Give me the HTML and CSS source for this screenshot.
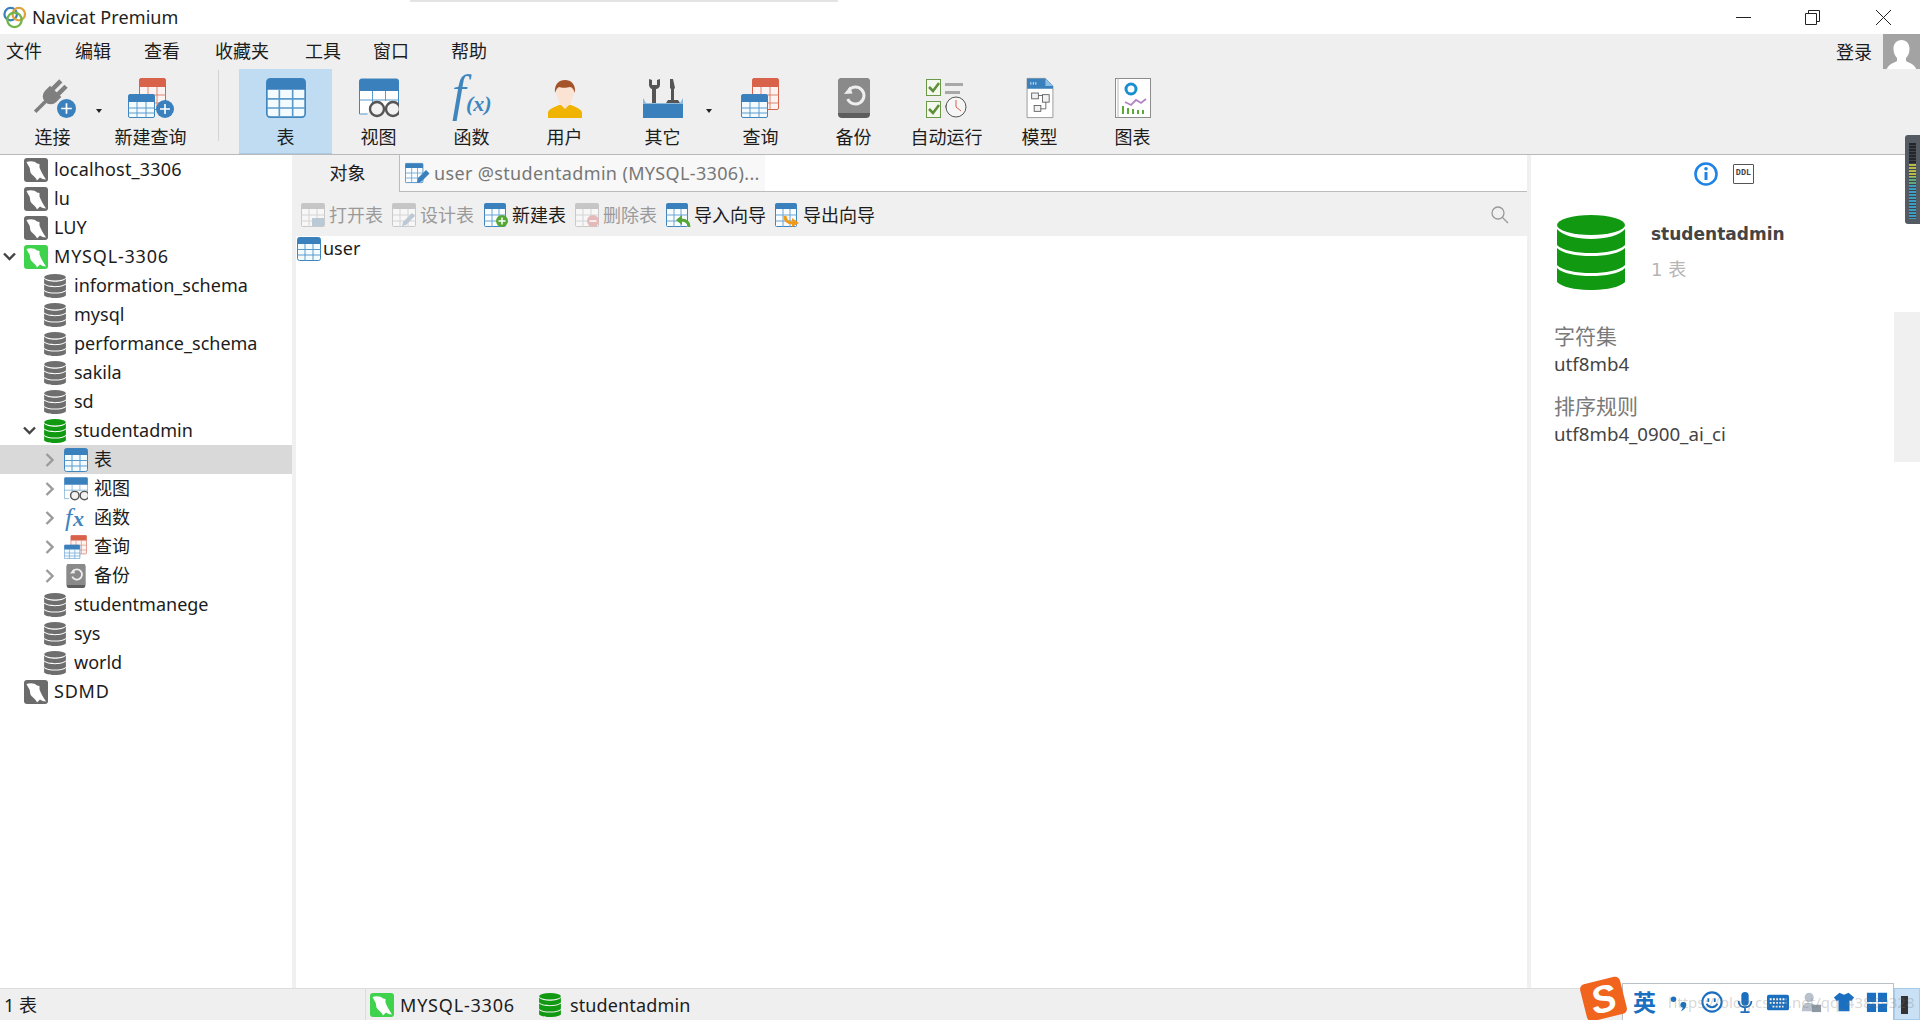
FILE: index.html
```html
<!DOCTYPE html>
<html lang="zh">
<head>
<meta charset="utf-8">
<title>Navicat Premium</title>
<link rel="stylesheet" href="styles.css">
</head>
<body>
<svg class="defs" width="0" height="0" aria-hidden="true">
  <defs>
    <symbol id="dolphin" viewBox="0 0 24 24">
      <path fill="#fff" d="M2.500 4C6 2.500 11 3 13 5.500L15.500 6v3.500C17 13 18.500 16.500 22 21.500 19.500 21.500 17.500 20.500 16 19.500L13 22.500C12 19.500 9.500 18 7.500 16 5.500 14 6.500 11.500 5.500 9.500 4.500 8 3.500 6 2.500 4z"/>
    </symbol>
    <symbol id="db" viewBox="0 0 68 75">
      <ellipse cx="34" cy="10" rx="34" ry="10" fill="currentColor"/>
      <path fill="currentColor" d="M0 14C10 27.300 58 27.300 68 14V30C58 40.700 10 40.700 0 30z"/>
      <path fill="currentColor" d="M0 33C10 43.700 58 43.700 68 33V50C58 60.700 10 60.700 0 50z"/>
      <path fill="currentColor" d="M0 53C10 63.700 58 63.700 68 53V67C58 77.700 10 77.700 0 67z"/>
    </symbol>
    <symbol id="tbl" viewBox="0 0 24 24">
      <rect x=".5" y=".5" width="23" height="23" rx="2" fill="#f4fbff" stroke="#3f86bf"/>
      <path fill="#3a80bd" d="M.5 7V2.500a2 2 0 0 1 2-2h19a2 2 0 0 1 2 2V7z"/>
      <path fill="none" stroke="#5b9bcb" d="M.5 12.500h23M.5 18h23M8 7v16.500M16 7v16.500"/>
    </symbol>
    <symbol id="viewi" viewBox="0 0 40 40">
      <path fill="#fff" stroke="#3f86bf" d="M.5 36V3a2 2 0 0 1 2-2h35a2 2 0 0 1 2 2v25"/>
      <path fill="#3a80bd" d="M.5 13V3a2 2 0 0 1 2-2h35a2 2 0 0 1 2 2v10z"/>
      <path fill="none" stroke="#5b9bcb" d="M.5 22h39M.5 36h8M13.500 13v12M26.500 13v10"/>
      <g fill="#f2f2f2" stroke="#555" stroke-width="2.400"><circle cx="18" cy="31" r="7"/><circle cx="34" cy="31" r="7"/></g>
    </symbol>
    <symbol id="query" viewBox="0 0 40 40">
      <rect x="11.500" y=".5" width="26" height="31" rx="1.500" fill="#fbf3f1" stroke="#d9624a"/>
      <path fill="#d9624a" d="M11.500 9V2a1.500 1.500 0 0 1 1.500-1.500h23A1.500 1.500 0 0 1 37.500 2v7z"/>
      <path fill="none" stroke="#df8473" d="M11.500 17h26M11.500 25h26M20 9v22M29 9v22"/>
      <rect x=".5" y="16.500" width="26" height="23" rx="1.500" fill="#f4fbff" stroke="#3f86bf"/>
      <path fill="#3a80bd" d="M.5 24v-6A1.500 1.500 0 0 1 2 16.500h23a1.500 1.500 0 0 1 1.500 1.500v6z"/>
      <path fill="none" stroke="#5b9bcb" d="M.5 30h26M.5 35h26M9 24v15.500M18 24v15.500"/>
    </symbol>
    <symbol id="backup" viewBox="0 0 32 40">
      <rect width="32" height="40" rx="4" fill="#5e5e5e"/>
      <path d="M0 4a4 4 0 0 1 4-4h24a4 4 0 0 1 4 4v31H0z" fill="#8a8a8a"/>
      <path fill="none" stroke="#eee" stroke-width="3" d="M11 12a8.500 8.500 0 1 1-1.300 9"/>
      <path fill="#eee" d="M6 16l8.500-.5-2.500-7z"/>
    </symbol>
    <symbol id="plus" viewBox="0 0 18 18">
      <circle cx="9" cy="9" r="9" fill="#3a80bd"/>
      <path stroke="#fff" stroke-width="1.600" d="M9 4v10M4 9h10"/>
    </symbol>
    <symbol id="chev-down" viewBox="0 0 13 9"><path fill="none" stroke="#444" stroke-width="2.400" d="M1 1.500l5.500 5.500L12 1.500"/></symbol>
    <symbol id="chev-right" viewBox="0 0 9 14"><path fill="none" stroke="#9b9b9b" stroke-width="2.400" d="M1.500 1l6 6-6 6"/></symbol>
    <symbol id="fade" viewBox="0 0 24 24">
      <rect x=".5" y=".5" width="23" height="23" rx="1" fill="#f7f7f7" stroke="#c9c9c9"/>
      <path fill="#c6c6c6" d="M.5 6V1a.5.500 0 0 1 .5-.5h22a.5.500 0 0 1 .5.500v5z"/>
      <path fill="none" stroke="#d4d4d4" d="M.5 12h23M.5 18h23M8 6v18M16 6v18"/>
    </symbol>
    <symbol id="tblb" viewBox="0 0 24 24">
      <rect x=".5" y=".5" width="21" height="23" rx="1" fill="#fafdff" stroke="#3f86bf"/>
      <path fill="#3a80bd" d="M.5 6V1.500a1 1 0 0 1 1-1h19a1 1 0 0 1 1 1V6z"/>
      <path fill="none" stroke="#6aa5d1" d="M.5 12h21M.5 18h21M8 6v18M15 6v18"/>
    </symbol>
  </defs>
</svg>

<div class="shadow-window"></div>

<header class="titlebar">
  <svg class="applogo" viewBox="0 0 24 24">
    <circle cx="8" cy="9" r="6.500" fill="none" stroke="#3a80bd" stroke-width="2.400"/>
    <circle cx="16.500" cy="9" r="6.500" fill="none" stroke="#e0a23c" stroke-width="2.400"/>
    <circle cx="12" cy="15" r="7.500" fill="none" stroke="#6fb54a" stroke-width="2.400"/>
  </svg>
  <span class="apptitle">Navicat Premium</span>
  <div class="winctl">
    <svg viewBox="0 0 15 15"><path d="M0 7.500h15" stroke="#222" fill="none"/></svg>
    <svg viewBox="0 0 15 15"><path d="M.5 3.500h11v11H.5zM3.500 3.500V.5h11v11h-3" stroke="#222" fill="none"/></svg>
    <svg viewBox="0 0 15 15"><path d="M0 0l15 15M15 0L0 15" stroke="#222" fill="none"/></svg>
  </div>
</header>

<nav class="menubar">
  <span class="menu m1">文件</span>
  <span class="menu m2">编辑</span>
  <span class="menu m3">查看</span>
  <span class="menu m4">收藏夹</span>
  <span class="menu m5">工具</span>
  <span class="menu m6">窗口</span>
  <span class="menu m7">帮助</span>
  <span class="login">登录</span>
  <svg class="avatar" viewBox="0 0 37 38">
    <rect width="37" height="38" fill="#a3a3a3"/>
    <path fill="#fff" d="M18.500 6c5 0 8 3.500 8 9 0 4-1.500 7-3.500 9v3c3 2 10 3 11 11H3c1-8 8-9 11-11v-3c-2-2-3.500-5-3.500-9 0-5.500 3-9 8-9z"/>
  </svg>
</nav>

<section class="toolbar">
  <div class="tool tool-more">
    <svg class="ti" viewBox="0 0 46 40">
      <g transform="translate(20 19) rotate(45)" fill="#7f7f7f">
        <path d="M-8-8H8v7A8 8 0 0 1-8-1z"/>
        <rect x="-6" y="-19" width="4.500" height="12"/>
        <rect x="1.500" y="-19" width="4.500" height="12"/>
        <rect x="-1.800" y="6" width="3.600" height="15"/>
      </g>
      <use href="#plus" x="27" y="21" width="19" height="19"/>
    </svg>
    <span class="tl">连接</span>
    <i class="drop"></i>
  </div>
  <div class="tool">
    <svg class="ti" viewBox="0 0 46 40">
      <use href="#query" x="0" y="0" width="40" height="40"/>
      <use href="#plus" x="28" y="22" width="18" height="18"/>
    </svg>
    <span class="tl">新建查询</span>
  </div>
  <span class="tsep"></span>
  <div class="tool selected">
    <svg class="ti" viewBox="0 0 40 40"><use href="#tbl" width="40" height="40"/></svg>
    <span class="tl">表</span>
  </div>
  <div class="tool">
    <svg class="ti" viewBox="0 0 40 40"><use href="#viewi" width="40" height="40"/></svg>
    <span class="tl">视图</span>
  </div>
  <div class="tool">
    <svg class="ti" viewBox="0 0 44 40"><text x="2" y="32" class="fxbig">f</text><text x="16" y="33" class="fxsm">(x)</text></svg>
    <span class="tl">函数</span>
  </div>
  <div class="tool">
    <svg class="ti" viewBox="0 0 40 40">
      <path fill="#f0b400" d="M3 40v-5c0-4 7-6 11-8h12c4 2 11 4 11 8v5z"/>
      <path fill="#fbe3d4" d="M14 25l6 6 6-6v-6H14z"/>
      <ellipse cx="20" cy="14" rx="9" ry="11" fill="#fbe3d4"/>
      <path fill="#a5542a" d="M10 15C9 6 14 2 20 2s11 4 10 13c-1-3-3-6-5-6-3 1-9 1-11 0-2 1-3 3-4 6z"/>
    </svg>
    <span class="tl">用户</span>
  </div>
  <div class="tool tool-more tool-after">
    <svg class="ti" viewBox="0 0 40 40">
      <path fill="#555" d="M6 1v6c0 2 2 4 3 4v14h4V11c2 0 4-2 4-4V1l-3 1v5H9V2zM27 1h3l2 9-1 1v11h4l2 3H23l2-3h3V11l-1-1z"/>
      <path fill="#3a80bd" d="M0 25h40v15H0z"/>
      <path fill="#8fbbdd" d="M0 20l3 5h34l3-5v6H0z"/>
    </svg>
    <span class="tl">其它</span>
    <i class="drop"></i>
  </div>
  <div class="tool">
    <svg class="ti" viewBox="0 0 40 40"><use href="#query" width="40" height="40"/></svg>
    <span class="tl">查询</span>
  </div>
  <div class="tool">
    <svg class="ti" viewBox="0 0 32 40"><use href="#backup" width="32" height="40"/></svg>
    <span class="tl">备份</span>
  </div>
  <div class="tool">
    <svg class="ti" viewBox="0 0 42 40">
      <g fill="#f4f8ee" stroke="#6a9a48"><rect x=".5" y="1.500" width="14" height="16"/><rect x=".5" y="23.500" width="14" height="16"/></g>
      <path d="M3 9l4 4 6-8M3 31l4 4 6-8" fill="none" stroke="#5f8f3a" stroke-width="2.500"/>
      <path fill="#a8a8a8" d="M19 5h18v3H19zM19 13h15v3H19zM19 27h4v3h-4z"/>
      <circle cx="30" cy="29" r="10" fill="#f6f6f6" stroke="#555"/>
      <path d="M30 22v7l5 4" stroke="#d9624a" fill="none"/>
    </svg>
    <span class="tl">自动运行</span>
  </div>
  <div class="tool">
    <svg class="ti" viewBox="0 0 32 48">
      <path fill="#fff" stroke="#8c8c8c" d="M.5.500h22l9 9v38H.5z"/>
      <path fill="#3a80bd" d="M.5.500h22l9 9V13H.5z"/>
      <path fill="#8fbfe4" d="M22.500.500l9 9h-9z"/>
      <path d="M5 5v3M8 5v3M11 5v3" stroke="#fff"/>
      <g fill="#f2f2f2" stroke="#555"><rect x="6" y="18" width="8" height="7"/><rect x="19" y="20" width="8" height="9"/><rect x="9" y="33" width="8" height="7"/></g>
      <path d="M14 21h5M23 29v8h-6" stroke="#555" fill="none"/>
    </svg>
    <span class="tl">模型</span>
  </div>
  <div class="tool">
    <svg class="ti" viewBox="0 0 36 40">
      <rect x=".5" y=".5" width="35" height="39" fill="#fff" stroke="#8c8c8c"/>
      <path d="M3 .5v39" stroke="#bbb"/>
      <circle cx="16" cy="11" r="5" fill="none" stroke="#1a8fd0" stroke-width="3"/>
      <path d="M10 24l6 3 5-5 5 3 5-4" fill="none" stroke="#b583c5" stroke-width="1.800"/>
      <path d="M7 28h2v8H7zM12 30h2v6h-2zM17 31h2v5h-2zM22 32h2v4h-2zM27 32h2v4h-2z" fill="#5ca83a"/>
    </svg>
    <span class="tl">图表</span>
  </div>
</section>

<main class="work">
  <aside class="tree">
    <div class="row"><span class="slot s0"></span><svg class="conn"><use href="#dolphin"/></svg><span class="nm ls2">localhost_3306</span></div>
    <div class="row"><span class="slot s0"></span><svg class="conn"><use href="#dolphin"/></svg><span class="nm">lu</span></div>
    <div class="row"><span class="slot s0"></span><svg class="conn"><use href="#dolphin"/></svg><span class="nm">LUY</span></div>
    <div class="row"><span class="slot s0"><svg class="cd"><use href="#chev-down"/></svg></span><svg class="conn on"><use href="#dolphin"/></svg><span class="nm ls1">MYSQL-3306</span></div>
    <div class="row"><span class="slot s1"></span><svg class="dbi"><use href="#db"/></svg><span class="nm">information_schema</span></div>
    <div class="row"><span class="slot s1"></span><svg class="dbi"><use href="#db"/></svg><span class="nm">mysql</span></div>
    <div class="row"><span class="slot s1"></span><svg class="dbi"><use href="#db"/></svg><span class="nm">performance_schema</span></div>
    <div class="row"><span class="slot s1"></span><svg class="dbi"><use href="#db"/></svg><span class="nm">sakila</span></div>
    <div class="row"><span class="slot s1"></span><svg class="dbi"><use href="#db"/></svg><span class="nm">sd</span></div>
    <div class="row"><span class="slot s1"><svg class="cd"><use href="#chev-down"/></svg></span><svg class="dbi green"><use href="#db"/></svg><span class="nm">studentadmin</span></div>
    <div class="row active"><span class="slot s2"><svg class="cr"><use href="#chev-right"/></svg></span><svg class="leaf" viewBox="0 0 24 24"><use href="#tbl" width="24" height="24"/></svg><span class="nm">表</span></div>
    <div class="row"><span class="slot s2"><svg class="cr"><use href="#chev-right"/></svg></span><svg class="leaf" viewBox="0 0 40 40"><use href="#viewi" width="40" height="40"/></svg><span class="nm">视图</span></div>
    <div class="row"><span class="slot s2"><svg class="cr"><use href="#chev-right"/></svg></span><svg class="leaf" viewBox="0 0 24 24"><text x="1" y="20" class="fxtree">f</text><text x="9" y="20" class="fxtree2">x</text></svg><span class="nm">函数</span></div>
    <div class="row"><span class="slot s2"><svg class="cr"><use href="#chev-right"/></svg></span><svg class="leaf" viewBox="0 0 40 40"><use href="#query" width="40" height="40"/></svg><span class="nm">查询</span></div>
    <div class="row"><span class="slot s2"><svg class="cr"><use href="#chev-right"/></svg></span><svg class="leaf" viewBox="0 0 32 40"><use href="#backup" width="32" height="40"/></svg><span class="nm">备份</span></div>
    <div class="row"><span class="slot s1"></span><svg class="dbi"><use href="#db"/></svg><span class="nm">studentmanege</span></div>
    <div class="row"><span class="slot s1"></span><svg class="dbi"><use href="#db"/></svg><span class="nm">sys</span></div>
    <div class="row"><span class="slot s1"></span><svg class="dbi"><use href="#db"/></svg><span class="nm">world</span></div>
    <div class="row"><span class="slot s0"></span><svg class="conn"><use href="#dolphin"/></svg><span class="nm ls1">SDMD</span></div>
  </aside>

  <section class="center">
    <div class="tabs">
      <div class="tab-obj">对象</div>
      <div class="tab-rest">
        <div class="tab-doc">
          <svg class="tabicon" viewBox="0 0 24 24">
            <use href="#tblb" width="20" height="24"/>
            <path fill="#3a80bd" d="M12 22l1-5 8-8 3.500 3.500-8 8z"/>
          </svg>
          <span>user @studentadmin (MYSQL-3306)...</span>
        </div>
      </div>
    </div>
    <div class="objbar">
      <div class="act off"><svg class="ai" viewBox="0 0 24 24"><use href="#fade" width="24" height="24"/><path fill="#b9c9d6" d="M11 15h12v8H11z"/></svg><span>打开表</span></div>
      <div class="act off"><svg class="ai" viewBox="0 0 24 24"><use href="#fade" width="24" height="24"/><path fill="#bcc9d4" d="M10 23l1-4 9-9 3 3-9 9z"/></svg><span>设计表</span></div>
      <div class="act act-new"><svg class="ai" viewBox="0 0 24 24"><use href="#tblb" width="24" height="24"/><circle cx="18" cy="18" r="6" fill="#56a834"/><path d="M18 14.500v7M14.500 18h7" stroke="#fff" stroke-width="1.500"/></svg><span>新建表</span></div>
      <div class="act off"><svg class="ai" viewBox="0 0 24 24"><use href="#fade" width="24" height="24"/><circle cx="18" cy="18" r="6" fill="#e3b9b9"/><path d="M14.500 18h7" stroke="#fff" stroke-width="1.500"/></svg><span>删除表</span></div>
      <div class="act"><svg class="ai" viewBox="0 0 24 24"><use href="#tblb" width="24" height="24"/><path d="M23 24c0-5-3-7-8-7" stroke="#56a834" stroke-width="3" fill="none"/><path d="M16 12l-6 5 6 5z" fill="#56a834"/></svg><span>导入向导</span></div>
      <div class="act"><svg class="ai" viewBox="0 0 24 24"><use href="#tblb" width="24" height="24"/><path d="M10 13c0 5 3 7 8 7" stroke="#f09a1a" stroke-width="3" fill="none"/><path d="M17 15l7 5-7 4z" fill="#f09a1a"/></svg><span>导出向导</span></div>
      <svg class="search" viewBox="0 0 18 18"><circle cx="7" cy="7" r="6" fill="none" stroke="#999" stroke-width="1.300"/><path d="M11.500 11.500L17 17" stroke="#999" stroke-width="1.300"/></svg>
    </div>
    <div class="objects">
      <div class="obj"><svg class="oi" viewBox="0 0 24 24"><use href="#tbl" width="24" height="24"/></svg><span class="nm">user</span></div>
    </div>
  </section>

  <aside class="info">
    <div class="info-tabs">
      <svg class="i-info" viewBox="0 0 24 24"><circle cx="12" cy="12" r="10.500" fill="none" stroke="#1e82e6" stroke-width="2.600"/><path d="M12 10v8" stroke="#1e82e6" stroke-width="3"/><circle cx="12" cy="6.800" r="1.800" fill="#1e82e6"/></svg>
      <span class="i-ddl">DDL</span>
    </div>
    <div class="info-head">
      <svg class="bigdb" viewBox="0 0 68 75"><use href="#db" width="68" height="75"/></svg>
      <div class="info-title">
        <div class="dbname">studentadmin</div>
        <div class="dbcount">1 表</div>
      </div>
    </div>
    <div class="f-label l1">字符集</div>
    <div class="f-value">utf8mb4</div>
    <div class="f-label l2">排序规则</div>
    <div class="f-value">utf8mb4_0900_ai_ci</div>
    <div class="scrollblock"></div>
  </aside>
</main>

<footer class="status">
  <span class="count">1 表</span>
  <div class="st-conn">
    <svg class="conn on"><use href="#dolphin"/></svg><span class="st-name ls1">MYSQL-3306</span>
    <svg class="dbi green st-db"><use href="#db"/></svg><span class="st-db-name">studentadmin</span>
  </div>
</footer>

<div class="meter"><i class="meter-bar"></i></div>

<div class="ime">
  <div class="ime-logo"><b>S</b></div>
  <div class="ime-bar">
    <span class="ime-cn">英</span>
    <svg class="ime-i" viewBox="0 0 24 24"><circle cx="6" cy="9" r="3" fill="#1a6fc0"/><path d="M17 12a3 3 0 0 1 3 3c0 3-3 6-6 7 1.500-2 2-3 2-4a3 3 0 0 1 1-6z" fill="#1a6fc0"/></svg>
    <svg class="ime-i" viewBox="0 0 24 24"><circle cx="12" cy="12" r="10.500" fill="#fff" stroke="#1a6fc0" stroke-width="2.200"/><path d="M8 8v4M15 8v4M6 14c3 5 9 5 12 0" stroke="#1a6fc0" stroke-width="2" fill="none"/></svg>
    <svg class="ime-i" viewBox="0 0 24 24"><rect x="8" y="1" width="8" height="15" rx="4" fill="#1a6fc0"/><path d="M5 11c0 9 14 9 14 0M12 18v5M7 23h10" stroke="#1a6fc0" stroke-width="2" fill="none"/></svg>
    <svg class="ime-i" viewBox="0 0 24 24"><rect y="4" width="24" height="17" rx="2" fill="#1a6fc0"/><path d="M3 9h18M3 13h18M6 17h12" stroke="#fff" stroke-width="2" stroke-dasharray="2 1.500"/></svg>
    <svg class="ime-i" viewBox="0 0 24 24"><circle cx="10" cy="7" r="5" fill="#b9c2cc"/><path d="M2 22c0-8 4-9 8-9s8 2 8 9z" fill="#b9c2cc"/><rect x="13" y="15" width="10" height="8" fill="#8d98a3"/></svg>
    <svg class="ime-i" viewBox="0 0 24 24"><path fill="#1a6fc0" d="M7 2l5 2 5-2 6 5-3 4-2-1v12H6V10l-2 1-3-4z"/></svg>
    <svg class="ime-i" viewBox="0 0 24 24"><path fill="#1a6fc0" d="M1 2h10v10H1zM13 2h10v10H13zM1 14h10v9H1zM13 14h10v9H13z"/></svg>
  </div>
  <div class="ime-end"><i></i></div>
</div>
<div class="watermark">https://blog.csdn.net/qq_43869328</div>
</body>
</html>
```

FILE: styles.css
```css
* { box-sizing: border-box; }
html, body { margin: 0; padding: 0; }
body {
  width: 1920px;
  height: 1020px;
  overflow: hidden;
  display: flex;
  flex-direction: column;
  position: relative;
  background: #fff;
  color: #1c1c1c;
  font: 18px/24px "Noto Sans", "Noto Sans CJK SC", sans-serif;
}
.defs { position: absolute; }
svg { display: block; flex: none; overflow: visible; }

.shadow-window {
  position: absolute;
  left: 410px;
  top: 0;
  width: 428px;
  height: 2px;
  background: #e3e3e3;
}

.titlebar {
  height: 34px;
  display: flex;
  align-items: center;
  padding-left: 3px;
  flex: none;
}
.applogo { width: 23px; height: 24px; margin-right: 6px; }
.apptitle { font-size: 18px; letter-spacing: .1px; color: #222; }
.winctl { margin-left: auto; display: flex; padding-right: 29px; gap: 54px; }
.winctl svg { width: 15px; height: 15px; }
.winctl svg:nth-child(2) { margin-right: 2px; }

.menubar {
  height: 35px;
  flex: none;
  background: #efefef;
  display: flex;
  align-items: flex-start;
  line-height: 35px;
  padding-left: 6px;
}
.menu { flex: none; }
.m1 { margin-right: 33px; }
.m2 { margin-right: 33px; }
.m3 { margin-right: 35px; }
.m4 { margin-right: 36px; }
.m5 { margin-right: 32px; }
.m6 { margin-right: 42px; }
.login { margin-left: auto; margin-right: 11px; line-height: 36px; }
.avatar { width: 37px; height: 38px; }

.toolbar {
  height: 86px;
  flex: none;
  background: #efefef;
  border-bottom: 1px solid #b9b9b9;
  display: flex;
  align-items: stretch;
  padding-left: 6px;
  z-index: 1;
}
.tool {
  position: relative;
  width: 93px;
  height: 85px;
  display: flex;
  flex-direction: column;
  align-items: center;
  padding-top: 9px;
}
.tool-more { margin-right: 5px; }
.tool-after { margin-left: 5px; }
.tool.selected { background: #bfdcf3; border-bottom: 1px solid #a9cbe6; }
.ti { height: 40px; width: auto; }
.tool .ti { width: 48px; }
.tl { margin-top: 6px; line-height: 26px; }
.drop {
  position: absolute;
  right: -3px;
  top: 40px;
  border: 3px solid transparent;
  border-top: 4px solid #222;
  border-bottom: 0;
}
.tsep {
  width: 1px;
  height: 71px;
  margin: 1px 20px 0 21px;
  align-self: flex-start;
  background: #d4d4d4;
}
.fxbig { font: italic 50px "Liberation Serif", serif; fill: #3f86bf; }
.fxsm { font: italic bold 22px "Liberation Serif", serif; fill: #3f86bf; }
.fxtree { font: italic 26px "Liberation Serif", serif; fill: #3f86bf; }
.fxtree2 { font: italic bold 22px "Liberation Serif", serif; fill: #3f86bf; }

.work {
  height: 833px;
  flex: none;
  display: flex;
  background: #f0f0f0;
}
.tree { width: 292px; flex: none; background: #fff; margin-right: 4px; }
.row { height: 29px; display: flex; align-items: center; }
.row.active { background: #d9d9d9; }
.nm { margin-top: -2px; }
.ls1 { letter-spacing: .8px; }
.ls2 { letter-spacing: .17px; }
.slot { flex: none; display: flex; justify-content: flex-end; align-items: center; padding-right: 8px; }
.s0 { width: 24px; }
.s1 { width: 44px; }
.s2 { width: 64px; padding-right: 10px; }
.cd { width: 13px; height: 9px; }
.cr { width: 9px; height: 14px; }
.conn { width: 24px; height: 24px; background: #6b6b6b; border-radius: 3px; margin-right: 6px; }
.conn.on { background: #3fd24c; }
.dbi { width: 22px; height: 24px; color: #6e6e6e; margin-right: 8px; }
.dbi.green { color: #119a11; }
.leaf { width: 24px; height: 24px; margin-right: 6px; }

.center { width: 1231px; flex: none; display: flex; flex-direction: column; margin-right: 4px; }
.tabs { height: 37px; flex: none; display: flex; }
.tab-obj { width: 103px; line-height: 36px; text-align: center; }
.tab-rest { flex: 1; background: #fff; border-left: 1px solid #bcbcbc; border-bottom: 1px solid #bcbcbc; }
.tab-doc {
  width: 365px;
  height: 36px;
  background: #f8f8f8;
  display: flex;
  align-items: center;
  padding-left: 5px;
  color: #777;
  letter-spacing: .35px;
  white-space: nowrap;
}
.tabicon { width: 24px; height: 24px; margin-right: 5px; }
.objbar {
  height: 44px;
  flex: none;
  display: flex;
  align-items: center;
  padding: 2px 0 0 5px;
  gap: 9px;
}
.act { display: flex; align-items: center; gap: 4px; }
.act-new { margin-left: 1px; }
.act.off { color: #9a9a9a; }
.ai { width: 24px; height: 24px; }
.search { width: 18px; height: 18px; margin-left: auto; margin-right: 18px; }
.objects { flex: 1; background: #fff; }
.obj { height: 26px; display: flex; align-items: center; padding-left: 1px; }
.oi { width: 24px; height: 24px; margin-right: 2px; }

.info { flex: 1; background: #fff; padding-left: 23px; position: relative; }
.info-tabs { height: 37px; display: flex; align-items: center; padding: 0 0 0 140px; gap: 15px; }
.i-info { width: 24px; height: 24px; }
.i-ddl {
  width: 21px;
  height: 20px;
  border: 1.500px solid #555;
  border-radius: 1px;
  font: bold 8.500px/17px "Liberation Mono", monospace;
  text-align: center;
  color: #444;
}
.info-head { display: flex; align-items: flex-start; margin-top: 23px; }
.bigdb { width: 68px; height: 75px; color: #119a11; margin-left: 3px; margin-right: 2px; }
.info-title { margin-left: 24px; }
.dbname { font: bold 17px/24px "DejaVu Sans", sans-serif; color: #444; margin-top: 7px; }
.dbcount { font: 18px/24px "DejaVu Sans", "Noto Sans CJK SC", sans-serif; color: #b5b5b5; margin-top: 12px; }
.f-label { font-size: 21px; line-height: 28px; color: #7a7a7a; }
.l1 { margin-top: 32px; }
.l2 { margin-top: 15px; }
.f-value { font-size: 18.700px; line-height: 26px; margin-top: 1px; color: #444; }
.scrollblock {
  position: absolute;
  right: 0;
  top: 157px;
  width: 26px;
  height: 150px;
  background: #f0f0f0;
}

.status {
  flex: 1;
  background: #efefef;
  border-top: 1px solid #dcdcdc;
  display: flex;
  align-items: center;
  padding-left: 4px;
}
.count { width: 361px; flex: none; }
.st-conn { display: flex; align-items: center; height: 100%; border-left: 1px solid #dcdcdc; padding-left: 4px; }
.st-name { margin-right: 24px; }
.st-db { margin-right: 9px; }
.st-db-name { letter-spacing: .15px; }

.meter {
  position: absolute;
  left: 1905px;
  top: 135px;
  width: 15px;
  height: 89px;
  background: #555b62;
  border-radius: 3px 0 0 3px;
  padding: 8px 4px 5px 4px;
  z-index: 3;
}
.meter-bar {
  display: block;
  height: 100%;
  background:
    repeating-linear-gradient(transparent 0 2px, #3d4349 2px 3px),
    linear-gradient(#23272c 0 28%, #b9b94a 28% 45%, #62a97a 45% 55%, #3d9cc4 55%);
}

.ime { position: absolute; left: 1582px; top: 978px; width: 338px; height: 42px; z-index: 4; }
.ime-logo {
  position: absolute;
  left: 1px;
  top: 2px;
  width: 41px;
  height: 38px;
  background: #f0641e;
  border-radius: 5px;
  transform: rotate(-14deg);
  text-align: center;
  z-index: 1;
}
.ime-logo b { color: #fff; font: italic bold 38px/38px "Liberation Sans", sans-serif; }
.ime-bar {
  position: absolute;
  left: 40px;
  top: 5px;
  width: 272px;
  height: 37px;
  background: #fff;
  border: 1px solid #b8c0c8;
  border-bottom: 0;
  display: flex;
  align-items: center;
  padding-left: 10px;
  gap: 11px;
}
.ime-cn { width: 24px; font-size: 23px; font-weight: 700; color: #1a6fc0; }
.ime-i { width: 22px; height: 24px; }
.ime-end {
  position: absolute;
  left: 312px;
  top: 10px;
  width: 26px;
  height: 32px;
  background: #c9e0f5;
  border: 1px solid #a8cbea;
}
.ime-end i { display: block; width: 7px; height: 18px; margin: 7px 0 0 6px; background: #333; }
.watermark {
  position: absolute;
  left: 1668px;
  top: 990px;
  z-index: 5;
  font-size: 15px;
  line-height: 24px;
  color: rgba(120, 120, 120, 0.3);
  white-space: nowrap;
}
```
